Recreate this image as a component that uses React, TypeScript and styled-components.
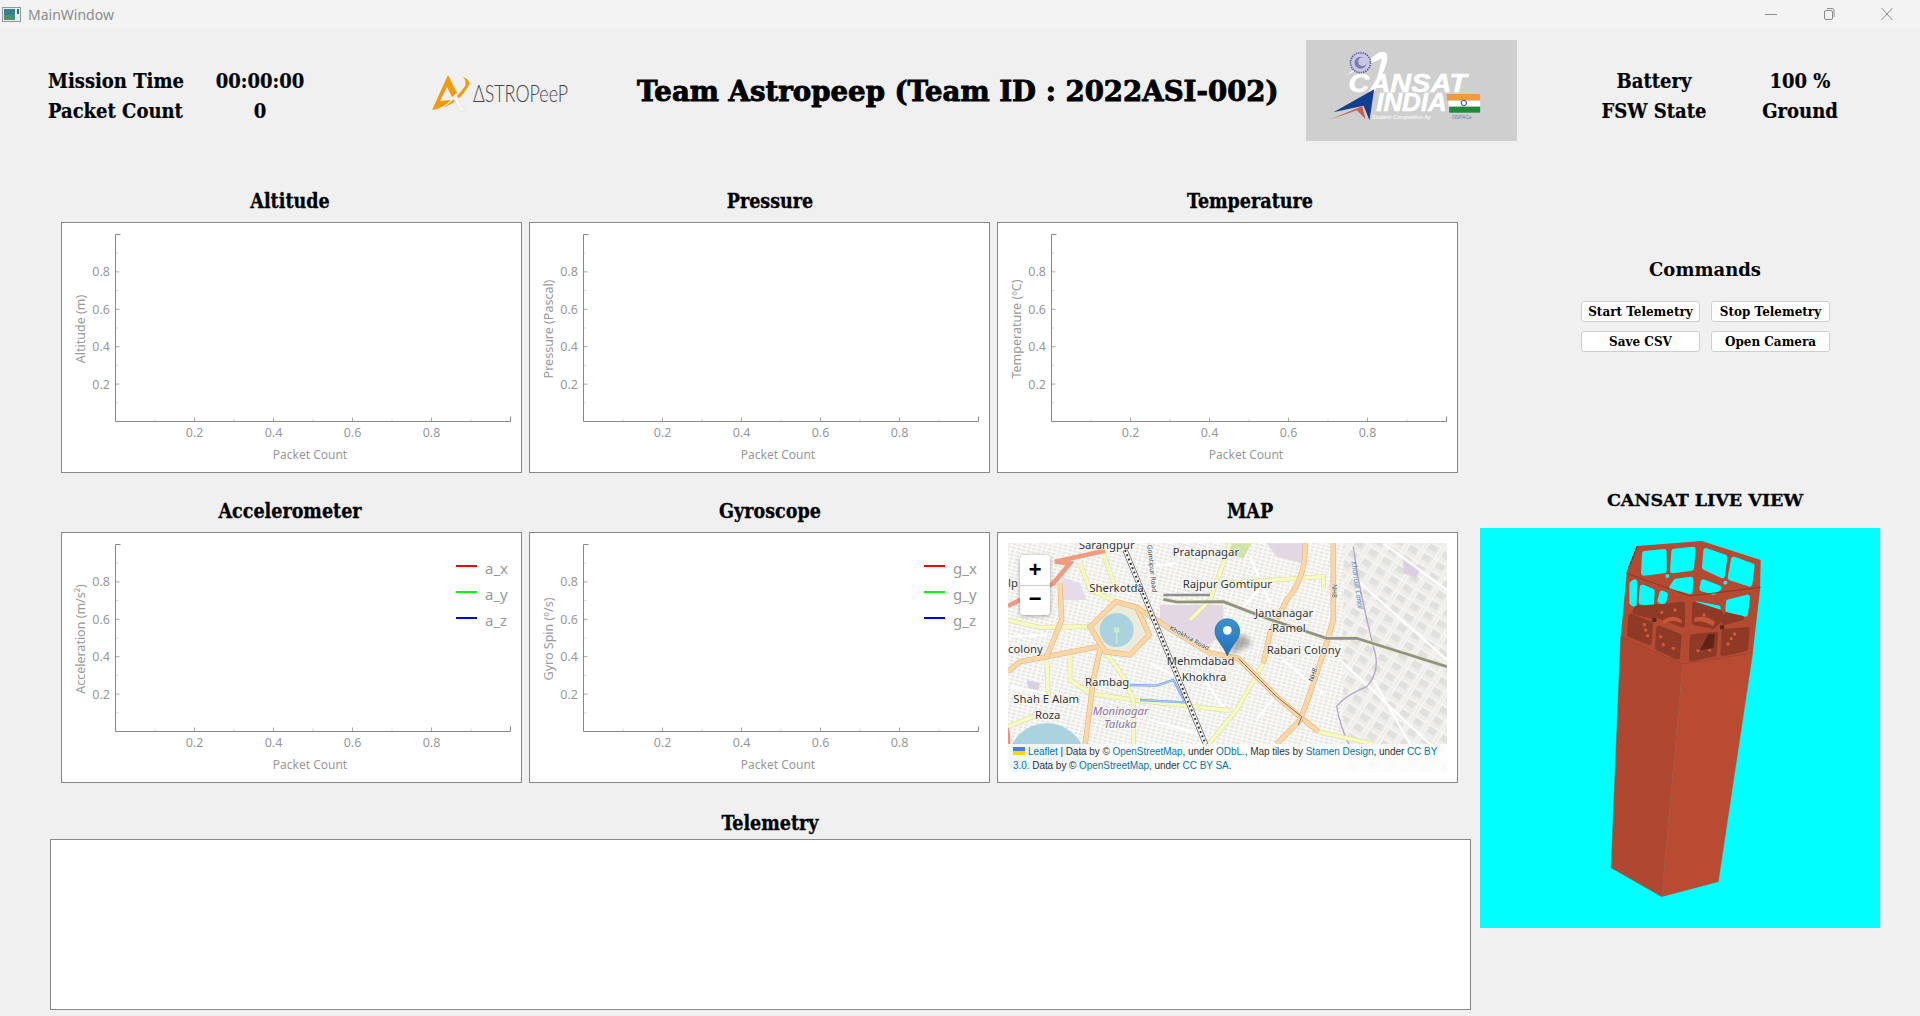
import React from 'react';
import styled, { createGlobalStyle } from 'styled-components';

const SLAB = '"DejaVu Serif", "Liberation Serif", serif';

const GlobalStyle = createGlobalStyle`
    html, body {
        background: #f0f0f0;
        margin: 0;
        padding: 0;
    }
`;

type Series = { color: string; name: string };

const X_TICKS = [0.2, 0.4, 0.6, 0.8];
const Y_TICKS = [0.2, 0.4, 0.6, 0.8];
const MINOR_TICKS = [0.1, 0.3, 0.5, 0.7, 0.9];
const AXIS = { left: 53.5, right: 448.5, top: 11.5, bottom: 198.5 };

const xPos = (v: number) => AXIS.left + (AXIS.right - AXIS.left) * v;
const yPos = (v: number) => AXIS.bottom - (AXIS.bottom - AXIS.top) * v;

const Chart = ({ yLabel, legend }: { yLabel: string; legend?: Series[] }) => (
    <ChartFrame>
        <svg width="459" height="249" viewBox="0 0 459 249">
            {MINOR_TICKS.map((v) => (
                <g key={v} stroke="#d8d8d8">
                    <line x1={xPos(v)} x2={xPos(v)} y1={AXIS.bottom} y2={AXIS.bottom - 3} />
                    <line x1={AXIS.left} x2={AXIS.left + 3} y1={yPos(v)} y2={yPos(v)} />
                </g>
            ))}
            {X_TICKS.map((v) => (
                <g key={v}>
                    <line x1={xPos(v)} x2={xPos(v)} y1={AXIS.bottom} y2={AXIS.bottom - 4} stroke="#a8a8a8" />
                    <TickText x={xPos(v)} y={214} textAnchor="middle">{v}</TickText>
                </g>
            ))}
            {Y_TICKS.map((v) => (
                <g key={v}>
                    <line x1={AXIS.left} x2={AXIS.left + 4} y1={yPos(v)} y2={yPos(v)} stroke="#a8a8a8" />
                    <TickText x={48} y={yPos(v) + 4.5} textAnchor="end">{v}</TickText>
                </g>
            ))}
            <path
                d={`M${AXIS.left + 5} ${AXIS.top}H${AXIS.left}V${AXIS.bottom}H${AXIS.right}V${AXIS.bottom - 5}`}
                fill="none"
                stroke="#85888c"
            />
            <AxisText x={248} y={236} textAnchor="middle">Packet Count</AxisText>
            <TickText x={23} y={106} textAnchor="middle" transform="rotate(-90 23 106)">
                {yLabel}
            </TickText>
            {legend?.map((s, i) => (
                <g key={s.name}>
                    <line x1={394} x2={415} y1={33 + i * 26} y2={33 + i * 26} stroke={s.color} strokeWidth="2" />
                    <LegendText x={423} y={41 + i * 26}>{s.name}</LegendText>
                </g>
            ))}
        </svg>
    </ChartFrame>
);

const ROADS_ORANGE = [
    'M300 320L378 245L440 262L478 345L420 405L345 395Z',
    'M440 262L530 320L660 400L745 415L860 530L930 590L985 635',
    'M54 455L90 425L170 410L325 380',
    'M210 190L215 300L170 410',
    'M330 390L310 480L295 600L285 675',
    'M1030 70L1030 300L1000 400L960 520L930 600L860 672',
    'M945 70Q950 170 890 240L840 340L820 430',
];
const ROADS_YELLOW = [
    'M54 300L150 322L300 320',
    'M300 520L430 540L720 572',
    'M820 430L780 500L740 570L650 680',
    'M600 300L660 240L700 130L720 70',
    'M700 190L1000 170L1000 205',
    'M270 130L300 210L378 245',
    'M340 100L375 200',
    'M170 410L175 530M240 400L240 480L300 520',
    'M345 395L400 470L430 540L430 672',
    'M985 635L1150 672',
    'M54 620L130 590',
];
const ROADS_MINOR = [
    'M1100 180L1371 420M1180 70L1371 210M1050 420L1371 720M1150 480L1260 672',
    'M620 450L700 560M800 600L860 520M480 600L620 640M60 500L170 520M60 350L170 345',
    'M780 110L840 250M880 420L1000 520M760 260L830 180M480 430L560 470M470 140L560 130',
];
const MAP_LABELS: [number, number, string][] = [
    [266, 88, 'Sarangpur'],
    [548, 108, 'Pratapnagar'],
    [578, 205, 'Rajpur Gomtipur'],
    [298, 217, 'Sherkotda'],
    [795, 290, 'Jantanagar'],
    [835, 335, '-Ramol'],
    [830, 403, 'Rabari Colony'],
    [530, 435, 'Mehmdabad'],
    [575, 483, 'Khokhra'],
    [285, 497, 'Rambag'],
    [70, 550, 'Shah E Alam'],
    [135, 597, 'Roza'],
    [54, 398, 'colony'],
    [54, 200, 'lp'],
];

const MapDrawing = () => (
    <svg width="439" height="229" viewBox="54 69 1317 687">
        <defs>
            <pattern id="streets" width="30" height="22" patternUnits="userSpaceOnUse" patternTransform="rotate(14)">
                <rect width="30" height="22" fill="#e9e7e1" />
                <path d="M0 3H30M0 14H30M7 0V22M22 0V22" stroke="#fff" strokeWidth="3" />
            </pattern>
            <pattern id="blocks" width="48" height="36" patternUnits="userSpaceOnUse" patternTransform="rotate(32)">
                <rect width="48" height="36" fill="#eeece7" />
                <rect x="6" y="6" width="26" height="18" fill="#e0e0de" />
                <path d="M0 2H48M2 0V36M40 0V36" stroke="#f8f8f8" strokeWidth="3" />
            </pattern>
            <linearGradient id="pin" x1="0" y1="0" x2="0" y2="1">
                <stop offset="0" stopColor="#3b93cf" />
                <stop offset="1" stopColor="#2470b8" />
            </linearGradient>
            <filter id="soft"><feGaussianBlur stdDeviation="8" /></filter>
        </defs>
        <rect x="54" y="69" width="1317" height="687" fill="url(#streets)" />
        <rect x="1060" y="69" width="311" height="687" fill="url(#blocks)" />
        <path d="M510 255H700V340L650 380L510 300Z" fill="#e3d7e4" />
        <path d="M830 70H940V130L860 110Z" fill="#e3d7e4" />
        <path d="M720 70H785L760 115L725 105Z" fill="#cfe4a8" />
        <path d="M215 170L270 190L290 240L215 240Z" fill="#e6dbe8" />
        <path d="M110 480L150 490L145 510L115 505Z" fill="#d9cfe0" />
        <path d="M1240 120L1290 140L1280 175L1240 160Z" fill="#dbcfe0" />
        <ellipse cx="170" cy="720" rx="115" ry="110" fill="#aad3df" />
        <path d="M54 610Q64 650 60 680L54 680Z" fill="#f0907a" />

        <path d="M300 320L378 245L440 262L478 345L420 405L345 395Z" fill="#ecebd9" />
        <circle cx="380" cy="330" r="51" fill="#aad3df" />
        <rect x="372" y="322" width="16" height="16" fill="#c8eac8" />
        <path d="M380 338V372" stroke="#c8eac8" strokeWidth="5" />

        {ROADS_MINOR.map((d) => (
            <path key={d} d={d} fill="none" stroke="#fff" strokeWidth="7" />
        ))}
        <path
            d="M1090 80Q1105 200 1150 380Q1175 450 1130 500Q1060 530 1040 560Q1050 620 1080 680"
            fill="none"
            stroke="#b9a4c8"
            strokeWidth="4"
        />

        {ROADS_YELLOW.map((d) => (
            <g key={d} fill="none">
                <path d={d} stroke="#d8d8a0" strokeWidth="14" />
                <path d={d} stroke="#f7fabf" strokeWidth="11" />
            </g>
        ))}
        {ROADS_ORANGE.map((d) => (
            <g key={d} fill="none">
                <path d={d} stroke="#e0b07c" strokeWidth="16" />
                <path d={d} stroke="#fcd6a4" strokeWidth="13" />
            </g>
        ))}
        <path d="M745 415L860 530L935 590L925 615" fill="none" stroke="#444" strokeWidth="2" />

        <g fill="none">
            <path d="M54 258L190 190L240 130L195 125L345 92" stroke="#f09b80" strokeWidth="14" />
            <path d="M520 238L560 246L700 245L830 295L1010 355L1100 355L1371 440" stroke="#eeeeae" strokeWidth="12" />
            <path d="M520 225H660M520 238L560 246L700 245L830 295L1010 355L1100 355L1371 440" stroke="#8f8f8f" strokeWidth="8" />
            <path d="M420 495L500 497L550 480L585 547L450 540" stroke="#6fa0f5" strokeWidth="7" />
            <path d="M420 495L500 497L550 480L585 547L450 540" stroke="#dfe9fb" strokeWidth="2" />
            <path d="M405 90L650 680" stroke="#333" strokeWidth="15" />
            <path d="M405 90L650 680" stroke="#fff" strokeWidth="12" />
            <path d="M405 90L650 680" stroke="#333" strokeWidth="6" strokeDasharray="6 8" />
        </g>

        {MAP_LABELS.map(([x, y, text]) => (
            <MapLabel key={text} x={x} y={y}>{text}</MapLabel>
        ))}
        <MapLabel x={308} y={585} $districts>Moninagar</MapLabel>
        <MapLabel x={342} y={623} $districts>Taluka</MapLabel>
        <RoadLabel x={537} y={328} transform="rotate(29 537 328)">Khokhra Road</RoadLabel>
        <RoadLabel x={472} y={75} transform="rotate(84 472 75)">Gomtipur Road</RoadLabel>
        <RoadLabel x={1025} y={192} transform="rotate(90 1025 192)">NH8</RoadLabel>
        <RoadLabel x={968} y={486} transform="rotate(-70 968 486)">NH8</RoadLabel>
        <CanalLabel x={1084} y={125} transform="rotate(82 1084 125)">Kharicut Canal</CanalLabel>

        <path d="M720 405L785 372L765 345L735 345Z" fill="#555" opacity="0.45" filter="url(#soft)" />
        <path d="M712 408C700 375 675 360 675 333A37 37 0 1 1 749 333C749 360 724 375 712 408Z" fill="url(#pin)" stroke="#2265a8" strokeWidth="2" />
        <circle cx="712" cy="331" r="13" fill="#fff" />
    </svg>
);

const CansatDrawing = () => (
    <LiveView>
        <svg width="400" height="400" viewBox="-60 144 1200 1200">
            <path d="M412 198L605 183L782 240L780 330L758 520L548 553L362 472L380 280Z" fill="#b34a31" />
            <g fill="#00ffff" stroke="#00ffff" strokeWidth="16" strokeLinejoin="round">
                <path d="M434 221L492 215L492 272L431 279Z" />
                <path d="M522 214L579 208L574 264L518 272Z" />
                <path d="M618 212L674 232L667 287L614 262Z" />
                <path d="M701 238L756 258L749 312L691 293Z" />
                <path d="M516 322L528 304L572 298L570 334L542 326Z" />
                <path d="M610 306L656 324L640 336L606 326Z" />
                <path d="M427 322L456 334L454 374L424 366Z" />
                <path d="M486 340L496 344L490 366L480 362Z" />
                <path d="M686 366L742 352L736 402L684 390Z" />
                <path d="M592 372L654 384L654 392L592 380Z" />
                <path d="M396 312L404 306L402 372L396 368Z" />
            </g>
            <g fill="#8f3a26" stroke="#8f3a26" strokeWidth="14" strokeLinejoin="round">
                <path d="M410 384L470 380L464 412L404 396Z" />
                <path d="M480 380L548 372L548 436L476 408Z" />
                <path d="M584 372L660 396L668 412L640 440L582 428Z" />
                <path d="M680 404L725 414L672 428Z" />
                <path d="M392 408L452 432L448 488L388 464Z" />
                <path d="M476 444L538 468L533 532L472 504Z" />
                <path d="M576 470L648 462L643 522L574 538Z" />
                <path d="M672 454L742 448L737 506L668 522Z" />
            </g>
            <g fill="#cf5a3c">
                <circle cx="433" cy="434" r="5" />
                <circle cx="437" cy="450" r="5" />
                <circle cx="443" cy="467" r="5" />
                <circle cx="482" cy="470" r="5" />
                <circle cx="490" cy="494" r="5" />
                <circle cx="520" cy="505" r="5" />
                <circle cx="594" cy="512" r="5" />
                <circle cx="629" cy="510" r="5" />
                <circle cx="704" cy="462" r="5" />
                <circle cx="694" cy="476" r="5" />
                <circle cx="684" cy="492" r="5" />
                <circle cx="485" cy="397" r="5" />
                <circle cx="525" cy="390" r="5" />
                <circle cx="612" cy="405" r="5" />
            </g>
            <path d="M490 420Q520 400 545 420L545 430Q515 415 490 432Z" fill="#c85538" />
            <path d="M585 412Q620 405 645 425L640 438Q610 420 582 425Z" fill="#c85538" />
            <path d="M600 510L625 462L645 462L640 505Z" fill="#5e2416" />
            <circle cx="666" cy="442" r="7" fill="#5e2416" />
            <circle cx="463" cy="420" r="7" fill="#5e2416" />
            <circle cx="502" cy="288" r="6" fill="#00ffff" />
            <circle cx="676" cy="308" r="6" fill="#00ffff" />
            <path d="M380 280L570 348L782 322M412 198L380 280M362 472L548 553L758 520" fill="none" stroke="#8a3723" strokeWidth="3" />
            <path d="M412 198L386 262" fill="none" stroke="#1a0a06" strokeWidth="3" />
            <path d="M362 472L548 553L485 1250L333 1163Z" fill="#b04730" stroke="#b04730" />
            <path d="M548 553L758 520L655 1205L485 1250Z" fill="#ba4b33" stroke="#ba4b33" />
        </svg>
    </LiveView>
);

const AstropeepLogo = () => (
    <LogoBox>
        <svg width="136" height="40" viewBox="0 0 136 40">
            <path d="M16 0L25 18L20 22L15 12L8 26L19 25Q10 34 0 35Z" fill="#f39a0c" />
            <path d="M31 2Q40 5 36 12Q28 26 11 33Q26 22 33 11Q35 6 31 2Z" fill="#f39a0c" />
            <path d="M21 23L25 21L33 36L28 36Z" fill="#f6f6f6" stroke="#ddd" strokeWidth="0.5" />
            <AstroText x="41" y="27" textLength="95" lengthAdjust="spacingAndGlyphs">ΔSTROPeeP</AstroText>
        </svg>
    </LogoBox>
);

const CansatLogo = () => (
    <CansatBox>
        <svg width="211" height="101" viewBox="18 15 632 303">
            <path d="M135 122Q190 85 238 52Q268 42 260 80Q248 125 220 165Q240 100 245 70Q205 90 135 122Z" fill="#fff" />
            <circle cx="181" cy="83" r="30" fill="#c8c8de" stroke="#5a5aa8" strokeWidth="5" strokeDasharray="4 3" />
            <circle cx="181" cy="83" r="18" fill="#7a7abc" />
            <circle cx="187" cy="80" r="13" fill="#c8c8de" />
            <LogoWord x="145" y="170" textLength="355" lengthAdjust="spacingAndGlyphs">CANSAT</LogoWord>
            <LogoWord x="228" y="228" textLength="212" lengthAdjust="spacingAndGlyphs">INDIA</LogoWord>
            <path d="M222 163L100 232L190 212L208 256Z" fill="#123f8f" />
            <path d="M85 255L186 214L196 252L170 226Z" fill="#c75b55" />
            <rect x="440" y="177" width="100" height="20" fill="#f39a3c" />
            <rect x="445" y="197" width="95" height="18" fill="#fff" />
            <rect x="447" y="215" width="93" height="18" fill="#1f8a3b" />
            <circle cx="491" cy="204" r="8" fill="#fff" stroke="#3a3a9a" strokeWidth="3" />
            <Tagline x="215" y="251">Student Competition by</Tagline>
            <MakerText x="456" y="251">NSPACe</MakerText>
        </svg>
    </CansatBox>
);

export default function App() {
    return (
        <Page>
            <GlobalStyle />
            <TitleBar>
                <AppIdentity>
                    <svg width="19" height="15" viewBox="0 0 19 15">
                        <rect x="0.5" y="0.5" width="18" height="14" fill="#e8eef0" stroke="#8a9aa4" />
                        <rect x="2" y="2" width="11" height="11" fill="#3b7f8c" />
                        <rect x="2" y="8" width="11" height="5" fill="#3d9a6a" />
                        <rect x="15" y="2" width="2" height="5" fill="#3a6a7a" />
                    </svg>
                    <WindowName>MainWindow</WindowName>
                </AppIdentity>
                <WindowControls>
                    <WindowButton>
                        <svg width="12" height="12" viewBox="0 0 12 12"><path d="M0 6.5H12" stroke="#8c8c8c" /></svg>
                    </WindowButton>
                    <WindowButton>
                        <svg width="12" height="14" viewBox="0 0 12 14" fill="none" stroke="#8c8c8c">
                            <rect x="1.5" y="3.5" width="8" height="9" rx="1.5" />
                            <path d="M4 1.5H9A2 2 0 0 1 11 3.5V10" />
                        </svg>
                    </WindowButton>
                    <WindowButton>
                        <svg width="12" height="14" viewBox="0 0 12 14"><path d="M0.5 1L11.5 13M11.5 1L0.5 13" stroke="#8c8c8c" /></svg>
                    </WindowButton>
                </WindowControls>
            </TitleBar>

            <Header>
                <StatGrid $offset={48} $columns="166px 92px">
                    <StatLabel>Mission Time</StatLabel>
                    <StatValue>00:00:00</StatValue>
                    <StatLabel>Packet Count</StatLabel>
                    <StatValue>0</StatValue>
                </StatGrid>
                <AstropeepLogo />
                <TeamTitle>Team Astropeep (Team ID : 2022ASI-002)</TeamTitle>
                <CansatLogo />
                <StatGrid $offset={80} $columns="114px 34px 110px">
                    <StatValue>Battery</StatValue>
                    <span />
                    <StatValue>100 %</StatValue>
                    <StatValue>FSW State</StatValue>
                    <span />
                    <StatValue>Ground</StatValue>
                </StatGrid>
            </Header>

            <Body>
                <LeftColumn>
                    <TitleRow>
                        <SectionTitle>Altitude</SectionTitle>
                        <SectionTitle>Pressure</SectionTitle>
                        <SectionTitle>Temperature</SectionTitle>
                    </TitleRow>
                    <ChartRow>
                        <Chart yLabel="Altitude (m)" />
                        <Chart yLabel="Pressure (Pascal)" />
                        <Chart yLabel="Temperature (ºC)" />
                    </ChartRow>
                    <TitleRow $top={27} $bottom={8}>
                        <SectionTitle>Accelerometer</SectionTitle>
                        <SectionTitle>Gyroscope</SectionTitle>
                        <SectionTitle>MAP</SectionTitle>
                    </TitleRow>
                    <ChartRow>
                        <Chart
                            yLabel="Acceleration (m/s²)"
                            legend={[
                                { color: '#ff0000', name: 'a_x' },
                                { color: '#00ff00', name: 'a_y' },
                                { color: '#0000ff', name: 'a_z' },
                            ]}
                        />
                        <Chart
                            yLabel="Gyro Spin (º/s)"
                            legend={[
                                { color: '#ff0000', name: 'g_x' },
                                { color: '#00ff00', name: 'g_y' },
                                { color: '#0000ff', name: 'g_z' },
                            ]}
                        />
                        <MapFrame>
                            <MapView>
                                <MapDrawing />
                                <ZoomControl>
                                    <ZoomButton>+</ZoomButton>
                                    <ZoomButton>−</ZoomButton>
                                </ZoomControl>
                                <Attribution>
                                    <FlagIcon />
                                    <MapLink>Leaflet</MapLink> | Data by © <MapLink>OpenStreetMap</MapLink>, under{' '}
                                    <MapLink>ODbL.</MapLink>, Map tiles by <MapLink>Stamen Design</MapLink>, under{' '}
                                    <MapLink>CC BY 3.0.</MapLink> Data by © <MapLink>OpenStreetMap</MapLink>, under{' '}
                                    <MapLink>CC BY SA</MapLink>.
                                </Attribution>
                            </MapView>
                        </MapFrame>
                    </ChartRow>
                    <TitleRow $top={29} $bottom={3}>
                        <span />
                        <SectionTitle>Telemetry</SectionTitle>
                    </TitleRow>
                    <TelemetryBox />
                </LeftColumn>

                <RightColumn>
                    <PanelTitle $top={108}>Commands</PanelTitle>
                    <CommandGrid>
                        <CommandButton>Start Telemetry</CommandButton>
                        <CommandButton>Stop Telemetry</CommandButton>
                        <CommandButton>Save CSV</CommandButton>
                        <CommandButton>Open Camera</CommandButton>
                    </CommandGrid>
                    <LiveTitle $top={136}>CANSAT LIVE VIEW</LiveTitle>
                    <CansatDrawing />
                </RightColumn>
            </Body>
        </Page>
    );
}

const Page = styled.div`
    background: #f0f0f0;
    display: flex;
    flex-direction: column;
    height: 1016px;
    overflow: hidden;
    width: 1920px;
`;

const TitleBar = styled.div`
    align-items: center;
    background: #f3f3f3;
    display: flex;
    flex: none;
    height: 28px;
    justify-content: space-between;
    padding-left: 2px;
`;

const AppIdentity = styled.div`
    align-items: center;
    display: flex;
    gap: 7px;
`;

const WindowName = styled.span`
    color: #8b8b8b;
    font-family: 'Noto Sans', sans-serif;
    font-size: 14px;
`;

const WindowControls = styled.div`
    display: flex;
    gap: 46px;
    padding-right: 27px;
`;

const WindowButton = styled.div`
    align-items: center;
    display: flex;
    height: 14px;
    justify-content: center;
    width: 12px;
`;

const Header = styled.div`
    align-items: flex-start;
    box-sizing: border-box;
    display: flex;
    flex: none;
    height: 122px;
    padding-top: 12px;
`;

const StatGrid = styled.div<{ $offset: number; $columns: string }>`
    display: grid;
    grid-auto-rows: 30px;
    grid-template-columns: ${({ $columns }) => $columns};
    margin-left: ${({ $offset }) => $offset}px;
    margin-top: 26px;
`;

const StatLabel = styled.span`
    -webkit-text-stroke: 0.2px #000;
    align-self: center;
    color: #000;
    font-family: ${SLAB};
    font-size: 20px;
    font-stretch: condensed;
    font-weight: 700;
    white-space: nowrap;
`;

const StatValue = styled(StatLabel)`
    text-align: center;
`;

const LogoBox = styled.div`
    height: 40px;
    margin-left: 126px;
    margin-top: 35px;
    width: 136px;
`;

const AstroText = styled.text`
    fill: #444;
    font-family: 'Lato', sans-serif;
    font-size: 24px;
    font-weight: 300;
`;

const TeamTitle = styled.h1`
    -webkit-text-stroke: 0.9px #000;
    color: #000;
    font-family: ${SLAB};
    font-size: 27.6px;
    font-weight: 700;
    line-height: 38px;
    margin: 33px 0 0 69px;
    white-space: nowrap;
    width: 643px;
`;

const CansatBox = styled.div`
    background: #cfcfcf;
    flex: none;
    height: 101px;
    margin-left: 26px;
    width: 211px;
`;

const LogoWord = styled.text`
    fill: #fff;
    font-family: 'Liberation Sans', sans-serif;
    font-size: 80px;
    font-style: italic;
    font-weight: 700;
    stroke: #fff;
    stroke-width: 1.5px;
`;

const Tagline = styled.text`
    fill: #fff;
    font-family: 'Liberation Sans', sans-serif;
    font-size: 17px;
    font-style: italic;
`;

const MakerText = styled.text`
    fill: #6b7fb0;
    font-family: 'Liberation Sans', sans-serif;
    font-size: 15px;
`;

const Body = styled.div`
    display: grid;
    flex: 1;
    grid-template-columns: 1480px 1fr;
`;

const LeftColumn = styled.div`
    display: flex;
    flex-direction: column;
    padding-top: 40px;
`;

const TitleRow = styled.div<{ $top?: number; $bottom?: number }>`
    display: grid;
    flex: none;
    grid-template-columns: repeat(3, 480px);
    height: 24px;
    margin-bottom: ${({ $bottom }) => $bottom ?? 8}px;
    margin-left: 50px;
    margin-top: ${({ $top }) => $top ?? 0}px;
    width: 1440px;
`;

const SectionTitle = styled.h2`
    -webkit-text-stroke: 0.3px #000;
    color: #000;
    font-family: ${SLAB};
    font-size: 19.5px;
    font-stretch: condensed;
    font-weight: 700;
    line-height: 24px;
    margin: 0;
    text-align: center;
`;

const ChartRow = styled.div`
    display: grid;
    flex: none;
    gap: 7px;
    grid-template-columns: repeat(3, 461px);
    margin-left: 61px;
`;

const ChartFrame = styled.div`
    background: #fff;
    border: 1px solid #85888c;
    box-sizing: border-box;
    height: 251px;
    width: 461px;

    svg {
        display: block;
    }
`;

const TickText = styled.text`
    fill: #999;
    font-family: 'Noto Sans', sans-serif;
    font-size: 12.5px;
`;

const AxisText = styled(TickText)`
    font-size: 12px;
`;

const LegendText = styled.text`
    fill: #999;
    font-family: 'Noto Sans', sans-serif;
    font-size: 15px;
`;

const MapFrame = styled(ChartFrame)`
    padding: 10px 10px 0;
`;

const MapView = styled.div`
    height: 229px;
    overflow: hidden;
    position: relative;
    width: 439px;
`;

const MapLabel = styled.text<{ $districts?: boolean }>`
    fill: ${({ $districts }) => ($districts ? '#8e6f9e' : '#333')};
    font-family: 'Noto Sans', sans-serif;
    font-size: 34px;
    font-style: ${({ $districts }) => ($districts ? 'italic' : 'normal')};
    paint-order: stroke;
    stroke: rgba(255, 255, 255, 0.7);
    stroke-width: 5px;
`;

const RoadLabel = styled.text`
    fill: #444;
    font-family: 'Noto Sans', sans-serif;
    font-size: 20px;
    paint-order: stroke;
    stroke: rgba(255, 255, 255, 0.7);
    stroke-width: 3px;
`;

const CanalLabel = styled.text`
    fill: #5a8fc8;
    font-family: 'Noto Sans', sans-serif;
    font-size: 22px;
    font-style: italic;
`;

const ZoomControl = styled.div`
    background: #fff;
    border-radius: 4px;
    box-shadow: 0 1px 4px rgba(0, 0, 0, 0.35);
    display: flex;
    flex-direction: column;
    left: 12px;
    position: absolute;
    top: 12px;
    width: 30px;
`;

const ZoomButton = styled.div`
    color: #000;
    font-family: 'Liberation Mono', monospace;
    font-size: 22px;
    font-weight: 700;
    height: 30px;
    line-height: 33px;
    text-align: center;

    & + & {
        border-top: 1px solid #ccc;
        box-sizing: border-box;
        line-height: 29px;
    }
`;

const Attribution = styled.div`
    background: rgba(255, 255, 255, 0.82);
    bottom: 0;
    box-sizing: border-box;
    color: #333;
    font-family: 'Liberation Sans', sans-serif;
    font-size: 10px;
    height: 28px;
    left: 0;
    letter-spacing: -0.05px;
    line-height: 14px;
    padding: 1px 5px 0;
    position: absolute;
    right: 0;
`;

const FlagIcon = styled.span`
    background: linear-gradient(#4c7be1 50%, #ffd500 50%);
    display: inline-block;
    height: 8px;
    margin-right: 3px;
    width: 12px;
`;

const MapLink = styled.span`
    color: #0078a8;
`;

const TelemetryBox = styled.div`
    background: #fff;
    border: 1px solid #85888c;
    box-sizing: border-box;
    flex: none;
    height: 171px;
    margin-left: 50px;
    width: 1421px;
`;

const RightColumn = styled.div`
    display: flex;
    flex-direction: column;
`;

const PanelTitle = styled.h2<{ $top: number }>`
    color: #000;
    font-family: ${SLAB};
    font-size: 18px;
    font-weight: 700;
    line-height: 24px;
    margin: ${({ $top }) => $top}px 0 0;
    text-align: center;
    width: 450px;
`;

const LiveTitle = styled(PanelTitle)`
    -webkit-text-stroke: 0.3px #000;
    font-size: 17.5px;
`;

const CommandGrid = styled.div`
    display: grid;
    gap: 9px 11px;
    grid-auto-rows: 21px;
    grid-template-columns: repeat(2, 119px);
    margin: 19px 0 0 101px;
`;

const CommandButton = styled.button`
    background: #fff;
    border: 1px solid #cfcfcf;
    border-radius: 3px;
    color: #000;
    font-family: ${SLAB};
    font-size: 12px;
    font-weight: 700;
    padding: 0;
`;

const LiveView = styled.div`
    background: #00ffff;
    height: 400px;
    margin-top: 16px;
    width: 400px;

    svg {
        display: block;
    }
`;
